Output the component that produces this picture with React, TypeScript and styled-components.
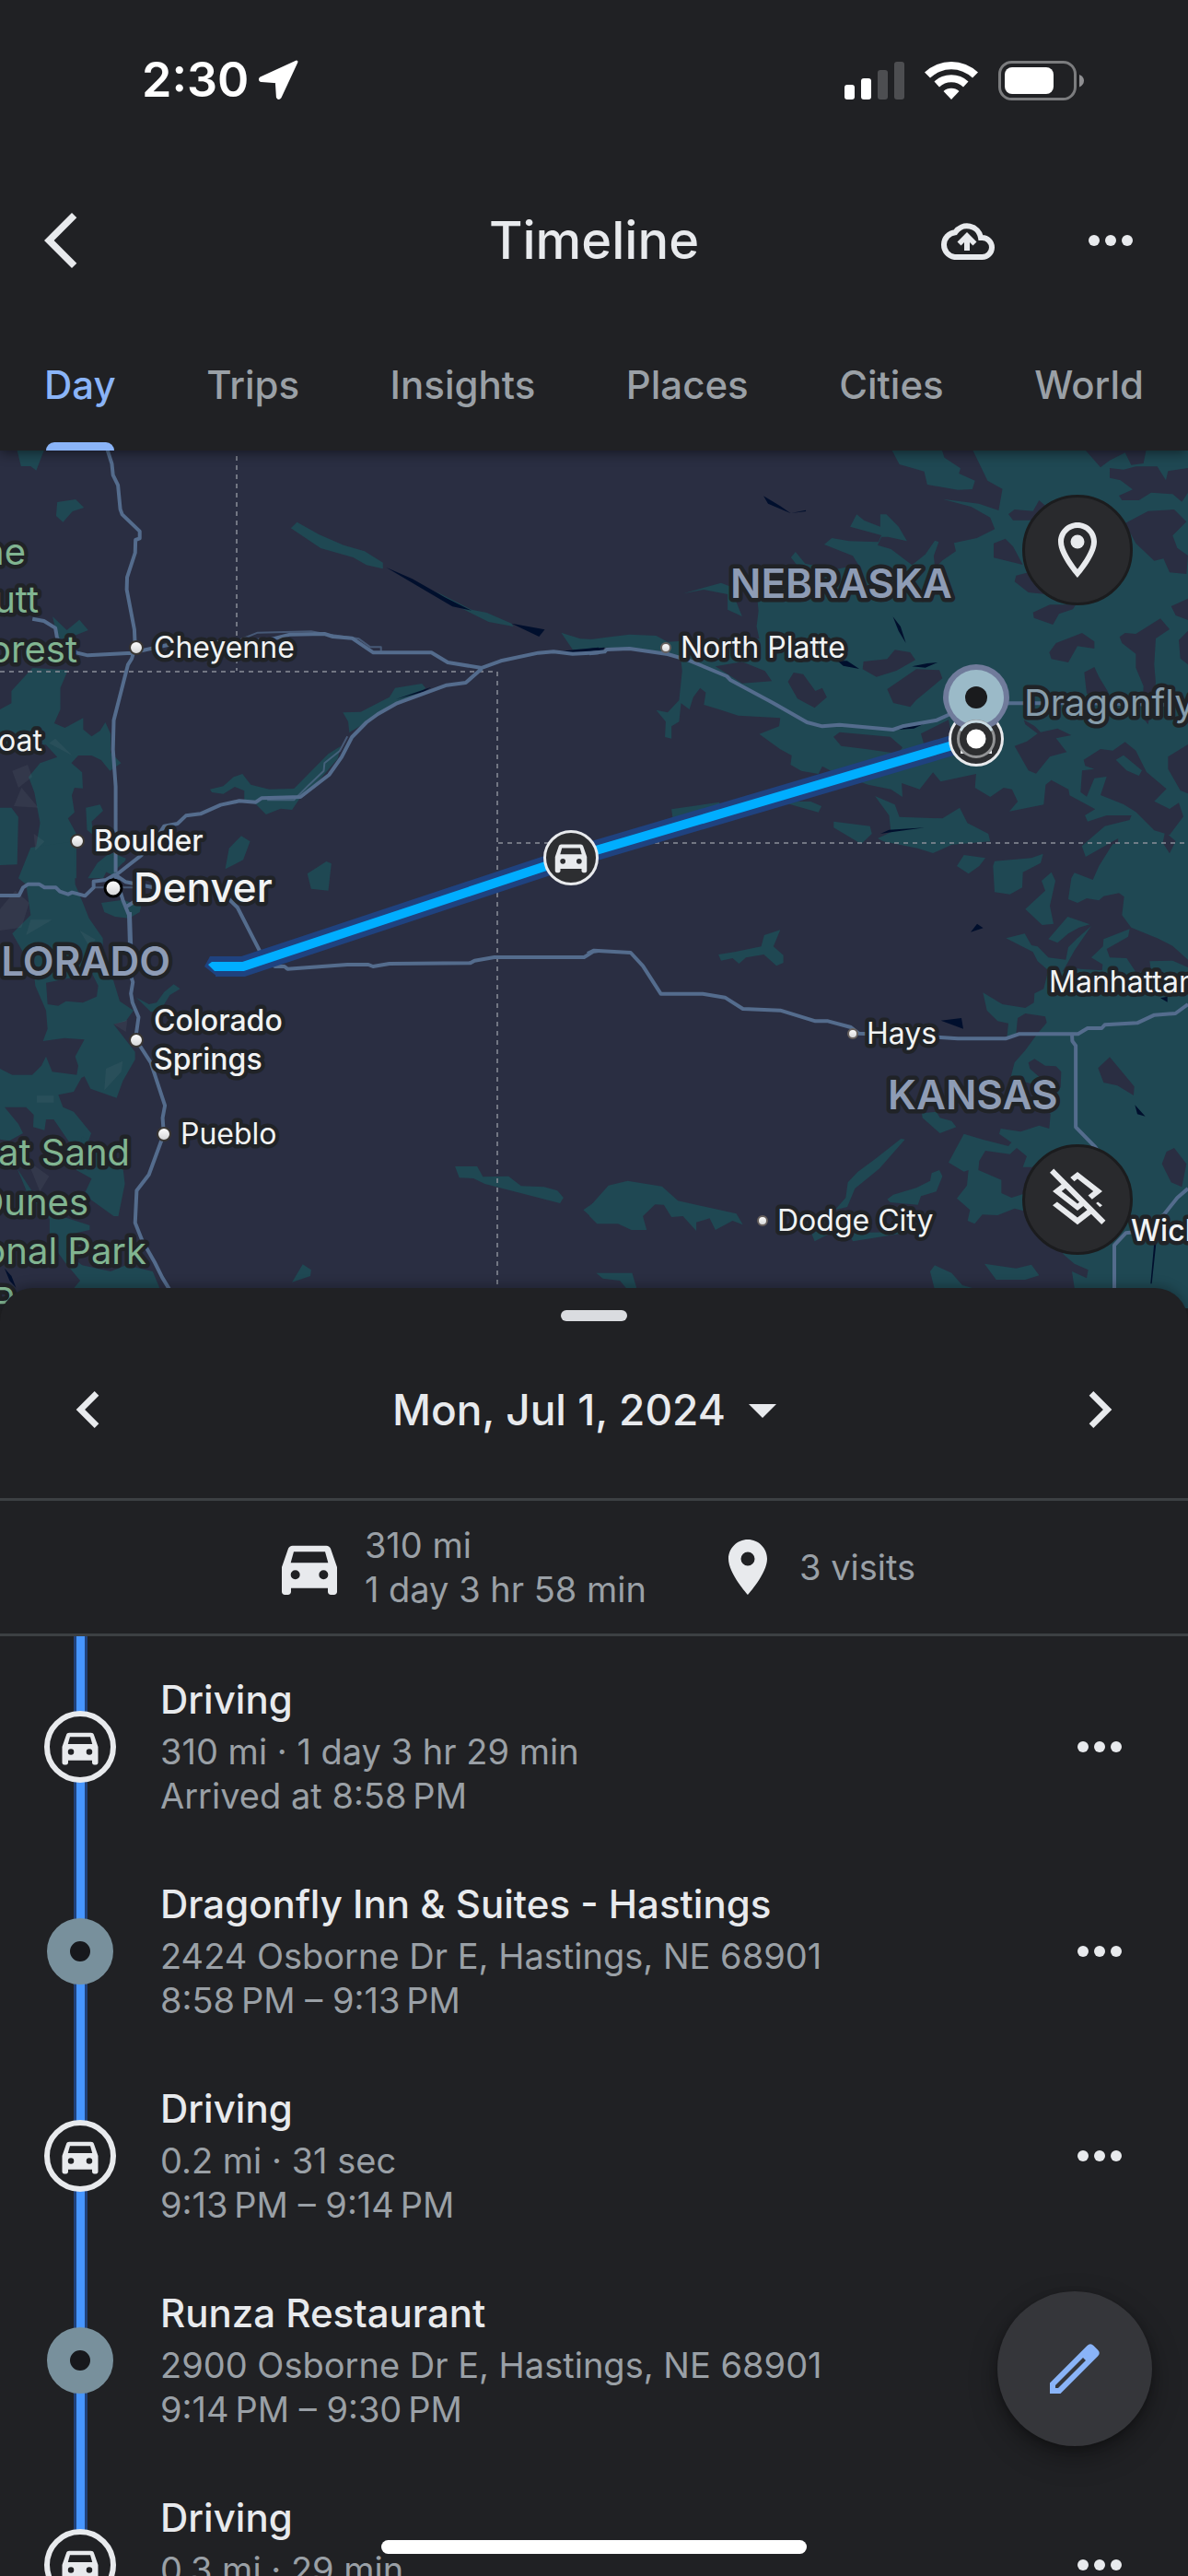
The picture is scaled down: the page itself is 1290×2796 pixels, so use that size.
import React from "react";
import styled, { createGlobalStyle, css } from "styled-components";
import {
  MdArrowBackIosNew,
  MdArrowDropDown,
  MdChevronLeft,
  MdChevronRight,
  MdLocationOn,
  MdOutlineLayersClear,
  MdOutlineLocationOn,
} from "react-icons/md";

const color = {
  surface: "#202124",
  text: "#e8eaed",
  muted: "#9aa0a6",
  accent: "#8ab4f8",
  divider: "#3c4043",
  land: "#2a2e42",
  park: "#1f4853",
  water: "#000f2d",
  road: "#546c8d",
};

const GlobalStyle = createGlobalStyle`
  *, *::before, *::after { box-sizing: border-box; }
  body {
    margin: 0;
    background: ${color.surface};
    color: ${color.text};
    font-family: Inter, "Liberation Sans", sans-serif;
  }
`;

const Screen = styled.div`
  position: relative;
  display: flex;
  flex-direction: column;
  height: 100vh;
  overflow: hidden;
`;

const bareButton = css`
  margin: 0;
  padding: 0;
  border: 0;
  background: none;
  color: inherit;
  font: inherit;
  cursor: pointer;
`;

const IconButton = styled.button`
  ${bareButton}
  display: flex;
  align-items: center;
  justify-content: center;
`;

const BackButton = styled(IconButton)`
  justify-self: start;
`;

const TopArea = styled.header`
  position: relative;
  z-index: 1;
  flex: none;
  background: ${color.surface};
  box-shadow: 0 3px 12px rgba(0, 0, 0, 0.45);
`;

const StatusBar = styled.div`
  display: flex;
  align-items: center;
  justify-content: space-between;
  height: 174px;
  padding: 0 112px 0 154px;
  color: #fff;
`;

const StatusGroup = styled.div<{ $gap: number }>`
  display: flex;
  align-items: center;
  gap: ${(p) => p.$gap}px;
`;

const Clock = styled.span`
  font-size: 52px;
  font-weight: 600;
  line-height: 60px;
`;

const TitleBar = styled.div`
  display: grid;
  grid-template-columns: 1fr auto 1fr;
  align-items: center;
  height: 174px;
  padding: 0 60px 0 30px;
`;

const Title = styled.h1`
  margin: 0;
  padding-left: 30px;
  font-size: 56px;
  font-weight: 500;
  line-height: 72px;
`;

const TitleActions = styled.div`
  display: flex;
  align-items: center;
  justify-content: flex-end;
  gap: 102px;
`;

const Tabs = styled.nav`
  display: flex;
  justify-content: space-between;
  height: 141px;
  padding: 0 48px;
`;

const Tab = styled.button<{ $active?: boolean }>`
  ${bareButton}
  position: relative;
  padding-bottom: 2px;
  font-size: 42px;
  font-weight: 500;
  line-height: 48px;
  color: ${(p) => (p.$active ? color.accent : color.muted)};

  ${(p) =>
    p.$active &&
    css`
      &::after {
        content: "";
        position: absolute;
        right: 2px;
        bottom: 0;
        left: 2px;
        height: 9px;
        border-radius: 9px 9px 0 0;
        background: ${color.accent};
      }
    `}
`;

const MapArea = styled.section`
  position: relative;
  flex: none;
  background: ${color.land};
`;

const MapCanvas = styled.svg`
  display: block;
  width: 100%;
  height: auto;

  .road {
    fill: none;
    stroke: ${color.road};
    stroke-width: 4px;
    stroke-linejoin: round;
    vector-effect: non-scaling-stroke;
  }
  .minor {
    stroke-width: 2px;
    opacity: 0.7;
  }
  .border {
    fill: none;
    stroke: #8b8e99;
    stroke-width: 1.5px;
    stroke-dasharray: 5 5;
    vector-effect: non-scaling-stroke;
  }
`;

type LabelKind = "town" | "city" | "major" | "state" | "park" | "place";

const labelStyles: Record<LabelKind, ReturnType<typeof css>> = {
  town: css`font-size: 32px; font-weight: 400; fill: #f1f3f4;`,
  city: css`font-size: 32px; font-weight: 500; fill: #f1f3f4;`,
  major: css`font-size: 44px; font-weight: 500; fill: #f1f3f4;`,
  state: css`font-size: 44px; font-weight: 600; fill: #8e9cb5;`,
  park: css`font-size: 40px; font-weight: 400; fill: #81b591;`,
  place: css`font-size: 40px; font-weight: 400; fill: #879dab;`,
};

const MapText = styled.text<{ $kind: LabelKind }>`
  font-family: Inter, "Liberation Sans", sans-serif;
  paint-order: stroke;
  stroke: #202327;
  stroke-width: 9px;
  stroke-linejoin: round;
  ${(p) => labelStyles[p.$kind]}
`;

const MapControls = styled.div`
  position: absolute;
  top: 48px;
  right: 60px;
  bottom: 58px;
  display: flex;
  flex-direction: column;
  justify-content: space-between;
`;

const MapControl = styled(IconButton)`
  width: 120px;
  height: 120px;
  border: 3px solid #1b1c1e;
  border-radius: 50%;
  background: #292a2d;
  color: ${color.text};
`;

const Sheet = styled.main`
  position: relative;
  display: flex;
  flex: 1;
  flex-direction: column;
  min-height: 0;
  margin-top: -22px;
  border-radius: 36px 36px 0 0;
  background: ${color.surface};
  box-shadow: 0 -3px 12px rgba(0, 0, 0, 0.25);
`;

const Handle = styled.div`
  flex: none;
  align-self: center;
  width: 72px;
  height: 12px;
  margin-top: 24px;
  border-radius: 6px;
  background: #dadce0;
`;

const DateBar = styled.div`
  display: flex;
  flex: none;
  align-items: center;
  justify-content: space-between;
  height: 192px;
  padding: 0 56px;
`;

const DateButton = styled.button`
  ${bareButton}
  display: flex;
  align-items: center;
  gap: 4px;
  font-size: 46px;
  font-weight: 500;
  line-height: 60px;
`;

const Summary = styled.section`
  display: flex;
  flex: none;
  align-items: center;
  justify-content: center;
  gap: 74px;
  height: 150px;
  border-top: 3px solid ${color.divider};
  border-bottom: 3px solid ${color.divider};
`;

const SummaryItem = styled.div`
  display: flex;
  align-items: center;
  gap: 20px;
`;

const Detail = styled.p`
  margin: 0;
  color: ${color.muted};
  font-size: 38px;
  line-height: 48px;
`;

const Entries = styled.ol`
  flex: 1;
  min-height: 0;
  margin: 0;
  padding: 9px 0 0;
  overflow-y: auto;
  scrollbar-width: none;
  list-style: none;
  background: linear-gradient(
      to right,
      #20427c 0 3px,
      #4796ff 3px 12px,
      #20427c 12px 15px
    )
    no-repeat 80px 0 / 15px 100%;
`;

const Entry = styled.li`
  display: grid;
  grid-template-columns: 174px 1fr auto;
  min-height: 222px;
  padding-right: 72px;
`;

const Rail = styled.div`
  display: flex;
  align-items: center;
  justify-content: center;
`;

const DrivingNode = styled.span`
  display: flex;
  align-items: center;
  justify-content: center;
  width: 78px;
  height: 78px;
  border: 6px solid ${color.text};
  border-radius: 50%;
  background: ${color.surface};
`;

const VisitNode = styled.span`
  width: 72px;
  height: 72px;
  border: 25px solid #78909c;
  border-radius: 50%;
  background: #17181c;
`;

const EntryBody = styled.div`
  padding-top: 30px;
`;

const EntryTitle = styled.h2`
  margin: 0 0 2px;
  font-size: 42px;
  font-weight: 500;
  line-height: 60px;
`;

const EditButton = styled(IconButton)`
  position: absolute;
  right: 39px;
  bottom: 141px;
  width: 168px;
  height: 168px;
  border-radius: 50%;
  background: #35363a;
  color: ${color.accent};
  box-shadow: 0 12px 30px rgba(0, 0, 0, 0.35), 0 3px 8px rgba(0, 0, 0, 0.25);
`;

const HomeIndicator = styled.div`
  position: absolute;
  bottom: 24px;
  left: 50%;
  width: 462px;
  height: 15px;
  margin-left: -231px;
  border-radius: 8px;
  background: #fff;
`;

const MoreDots = () => (
  <svg width="48" height="48" viewBox="0 0 48 48" fill={color.text} aria-hidden="true">
    <circle cx="6" cy="24" r="6" />
    <circle cx="24" cy="24" r="6" />
    <circle cx="42" cy="24" r="6" />
  </svg>
);

const LocationArrow = () => (
  <svg width="44" height="44" viewBox="0 0 42 42" aria-hidden="true">
    <path
      d="M40 2 L3 19 Q1.500 20.500 3.500 21.500 L19.500 22.500 L20.500 38.500 Q21.500 40.500 23 38.500 Z"
      fill="#fff"
      stroke="#fff"
      strokeWidth="3"
      strokeLinejoin="round"
    />
  </svg>
);

const Signal = () => (
  <svg width="65" height="43" viewBox="0 0 65 43" aria-hidden="true">
    <rect x="0" y="26" width="11" height="16" rx="3" fill="#fff" />
    <rect x="18" y="19" width="11" height="23" rx="3" fill="#fff" />
    <rect x="36" y="10" width="11" height="32" rx="3" fill="#4d4e51" />
    <rect x="54" y="1" width="11" height="41" rx="3" fill="#4d4e51" />
  </svg>
);

const Wifi = () => (
  <svg width="58" height="43" viewBox="0 0 58 43" aria-hidden="true">
    <g fill="#fff">
      <path d="M0 12.500 A42 42 0 0 1 58 12.500 L52 18.500 A33.500 33.500 0 0 0 6 18.500 Z" />
      <path d="M10.500 22.500 A27 27 0 0 1 47.500 22.500 L42 28.500 A19 19 0 0 0 16 28.500 Z" />
      <path d="M20.500 33 A13 13 0 0 1 37.500 33 L29 42 Z" />
    </g>
  </svg>
);

const Battery = () => (
  <svg width="94" height="43" viewBox="0 0 94 43" aria-hidden="true">
    <rect x="1.500" y="1.500" width="82" height="40" rx="13" fill="none" stroke="#7b7c7e" strokeWidth="3" />
    <rect x="7" y="7" width="53" height="29" rx="8" fill="#fff" />
    <path d="M88 15 Q93 17 93 21.500 Q93 26 88 28.500 Z" fill="#8f8f92" />
  </svg>
);

const CloudUpload = () => (
  <svg width="60" height="42" viewBox="0 0 60 42" aria-hidden="true">
    <path
      d="M46.500 39 A10.500 10.500 0 0 0 46.500 18 H45 A15.200 15.200 0 0 0 17.300 12.200 A13.500 13.500 0 0 0 16.500 39 Z"
      fill="none"
      stroke={color.text}
      strokeWidth="6"
    />
    <path d="M30 12 40.500 22.500 36.500 26.500 33 23V32H27V23L23.500 26.500 19.500 22.500Z" fill={color.text} />
  </svg>
);

const Car = ({ size, x, y }: { size: number; x?: number; y?: number }) => (
  <svg x={x} y={y} width={size} height={size} viewBox="0 0 24 24" aria-hidden="true">
    <path
      fill={color.text}
      fillRule="evenodd"
      d="M18.920 6.010C18.720 5.420 18.160 5 17.500 5h-11c-.66 0-1.210.42-1.420 1.010L3 12v8c0 .55.45 1 1 1h1c.55 0 1-.45 1-1v-1.200h12V20c0 .55.45 1 1 1h1c.55 0 1-.45 1-1v-8l-2.080-5.990zM6.900 7h10.200l1 3.600H5.900zM7.400 16a1.500 1.500 0 1 1 0-3 1.500 1.500 0 0 1 0 3zm9.200 0a1.500 1.500 0 1 1 0-3 1.500 1.500 0 0 1 0 3z"
    />
  </svg>
);

const Pencil = () => (
  <svg width="54" height="54" viewBox="0 0 54 54" aria-hidden="true">
    <path
      fill={color.accent}
      fillRule="evenodd"
      d="M0 54V42.500L40.500 2Q44-1.500 47.500 2L52 6.500Q55.500 10 52 13.500L11.500 54ZM6 48H9L39 18 36 15 6 45Z"
    />
  </svg>
);

type Label = { text: string; x: number; y: number; kind: LabelKind; end?: boolean };

const labels: Label[] = [
  { text: "ne", x: 28, y: 125, kind: "park", end: true },
  { text: "utt", x: 42, y: 177, kind: "park", end: true },
  { text: "orest", x: 84, y: 231, kind: "park", end: true },
  { text: "oat", x: 46, y: 327, kind: "town", end: true },
  { text: "Cheyenne", x: 167, y: 226, kind: "town" },
  { text: "North Platte", x: 739, y: 226, kind: "town" },
  { text: "NEBRASKA", x: 793, y: 161, kind: "state" },
  { text: "Dragonfly", x: 1112, y: 289, kind: "place" },
  { text: "Boulder", x: 102, y: 436, kind: "city" },
  { text: "Denver", x: 145, y: 491, kind: "major" },
  { text: "LORADO", x: 185, y: 571, kind: "state", end: true },
  { text: "Colorado", x: 167, y: 631, kind: "city" },
  { text: "Springs", x: 167, y: 673, kind: "city" },
  { text: "Pueblo", x: 196, y: 754, kind: "town" },
  { text: "at Sand", x: 141, y: 777, kind: "park", end: true },
  { text: "Dunes", x: 96, y: 831, kind: "park", end: true },
  { text: "onal Park", x: 159, y: 884, kind: "park", end: true },
  { text: "P", x: 16, y: 938, kind: "park", end: true },
  { text: "Manhattan", x: 1139, y: 589, kind: "town" },
  { text: "Hays", x: 941, y: 645, kind: "town" },
  { text: "KANSAS", x: 964, y: 716, kind: "state" },
  { text: "Dodge City", x: 844, y: 848, kind: "town" },
  { text: "Wichita", x: 1228, y: 859, kind: "city" },
];

const cityDots = [
  { x: 148, y: 215, r: 7 },
  { x: 84, y: 425, r: 7 },
  { x: 148, y: 641, r: 7 },
  { x: 178, y: 743, r: 7 },
  { x: 723, y: 215, r: 5 },
  { x: 926, y: 634, r: 5 },
  { x: 828, y: 837, r: 5 },
];

const NW = "translate(0 -8) scale(.41454 .33333)";
const NE = "translate(640 -8) scale(.41454 .33333)";
const SW = "translate(0 452) scale(.41454 .33333)";
const SE = "translate(640 452) scale(.41454 .33333)";
const FRONT_RANGE = "translate(0 292) scale(.33333)";
const EAST_NEBRASKA = "translate(900 0) scale(.33333)";
const EAST_KANSAS = "translate(900 452) scale(.33333)";

const parks: [string, string][] = [
  [
    NW,
    `M150 195 198 186 220 213 190 225 165 260 147 240Z M45 27H115L95 92 80 78H55Z
    M778 260 835 300 900 335 955 355 1003 392V412L960 400 925 375 840 345 762 280Z
    M1235 545 1275 555 1340 590 1345 600 1280 585 1200 535 1140 485Z
    M1470 620 1520 640 1568 643V672L1500 675Z
    M138 568 175 612 208 578 231 612 175 640H150Z
    M898 880 945 878 1020 830 1035 800 1105 786 1115 800 1100 815 1040 850 960 912 915 945 912 910Z
    M550 1130 585 1120 612 1090 635 1080 657 1115 705 1130 770 1128 860 1015 892 990 885 1030 840 1095 785 1160 765 1197 735 1193 697 1212 670 1178 640 1165V1135L615 1122 585 1145 555 1140Z
    M632 1282 655 1300 637 1360 590 1390 600 1322Z M805 1405 855 1365 868 1372 860 1460 815 1454Z
    M85 735 178 742 158 800V870L142 915 170 930 218 898V935L240 958 262 940 276 912 290 950V1010L317 1045 288 1070 265 1035 240 1020H205L187 1045 215 1075 217 1127 195 1125 188 1150 195 1205 178 1225 200 1275V1420H80L105 1240 90 1140 75 1090 105 1045 150 1025 120 985 60 990 0 1000V870L30 850V810Z
    M0 1190H30L48 1220 45 1375 0 1377Z M225 1190 262 1180 270 1200 240 1235 245 1280 228 1262Z
    M290 1335 330 1355 325 1368 290 1370 270 1420H230L255 1370Z`,
  ],
  [
    FRONT_RANGE,
    `M100 420 240 400 245 540 270 600 290 650 335 715V740L390 920 435 950 410 985 370 995 440 1085V1110L400 1180 380 1235 295 1205 275 1165 265 1170 240 1215 190 1225 205 1265 240 1280 297 1350 290 1370 240 1400 175 1305H150L145 1340 108 1330 110 1290 85 1265H15L60 1320 75 1350 30 1375 0 1370V1140L40 1160H105L135 1130 150 1100 170 1150 250 1160 255 1130 245 1100 275 1045 210 1040 140 1050 155 1010 150 950 115 870 110 820 40 700 100 640 85 540 60 520Z
    M330 600 400 590 460 610 455 630 420 650 375 645 340 630Z M325 490 370 450 410 460 380 490V515Z`,
  ],
  [
    SW,
    `M215 880 320 960 327 1035 310 1140 298 1140 220 1070 240 1018 200 990Z
    M45 985 95 1080 160 1140 235 1170V1185L180 1200 175 1260 215 1300 290 1320 330 1300 400 1320 420 1380H190L210 1350 170 1290 130 1220V1150L70 1060Z
    M455 385 472 400 445 420 420 470 395 475 357 428 390 450 410 445 430 410Z
    M1192 978H1250L1265 1012 1332 1010 1365 1042 1425 1045 1460 1057 1476 1080 1467 1098 1270 1035 1240 1017 1203 1015Z
    M1528 1120 1568 1085V1165Z M765 1355 793 1297 815 1315 813 1335Z`,
  ],
  [
    NE,
    `M790 20 812 72 877 95 885 138 965 155 1003 153 1010 125 968 102 972 85 930 50 922 20Z
    M1002 20 1043 125 1082 152 1072 222 1020 200 925 185 1000 210 1050 245 1062 283 1015 312 955 328 960 355 925 385 905 410 902 370 915 325 905 320 880 365 845 400 790 348 755 335 765 308 782 308 832 322 810 275 778 235H762V275L720 255 700 235 683 275 765 303 757 325 680 322 635 312 615 333 690 370 705 400 640 415 565 395 540 357 528 375 550 410 480 560 500 555 505 525 560 540 590 500 440 510 443 550 438 600 445 640 340 640 205 650 175 630 105 626 45 635 0 643V680L45 668 100 672 205 690 240 710 243 745 235 840 205 880 175 872 200 910 198 960 215 965V925L235 910 240 850 262 870 272 830 290 800 305 815 300 855 340 870 390 890 500 898 497 925 445 950 500 1000 530 1020 527 1050 555 1070 600 1080 610 1055 640 1075 730 1115 790 1130 820 1155 818 1110 865 1130 900 1075 920 1105 1013 1080 1010 1125 1050 1155 1085 1125 1107 1130 1122 1170 1100 1202 1190 1180 1195 1115 1210 1100 1255 1130 1258 1150 1325 1195 1298 1215 1305 1235 1355 1215 1420 1215 1415 1230 1350 1250 1290 1315 1300 1350 1385 1290 1385 1305 1330 1420H1568V20Z
    M345 458 245 493 300 480 362 495V545L400 567 388 530 370 470Z
    M748 1152 800 1180 812 1220 925 1225 970 1190 990 1240 1045 1275 1050 1300 950 1310 900 1338 860 1322 770 1300 755 1290 790 1270 785 1215Z
    M640 1235 735 1250 740 1275 712 1308 640 1255Z M215 1195 340 1172 345 1185 220 1240Z M500 1170H580L608 1185 600 1205Z`,
  ],
  [
    EAST_KANSAS,
    `M925 -72 880 0 860 45 800 22 790 40 780 108 810 120 840 105 880 112 895 98 945 88 962 100 955 160 985 200 1070 235 1120 260 1170 305V330L1120 308 1045 310 1050 345H1000L970 300 915 298 905 270 975 230 980 205 895 238 893 262 855 298 892 320 890 340 820 335 790 330 760 345 775 320 800 275 855 195 810 235 780 265 772 305 715 298 680 262 660 258 638 220 577 235 665 280 680 310 715 340 700 400 670 415 668 445 640 462 565 450 502 412 515 470 550 505 585 512 580 560 610 545 615 495 640 480 705 490 710 510 680 545 640 600 605 640 592 690 700 720 722 810 718 855 685 845 625 865 560 855 555 872 595 900 585 912 500 890 440 872 390 965 440 995 455 990 450 1040 417 1082 460 1120 452 1155 475 1165 500 1135 550 1137 605 1115 700 1140 765 1265 800 1295 845 1315 840 1342 792 1320 810 1440H1170V-72Z
    M417 0 440 -36 510 -26 490 0 455 25Z
    M535 0 540 -16 660 -26 698 -40 690 -10 632 20 630 70 590 92 540 85Z
    M640 140 705 80 693 48 725 20 738 48 720 130 732 188 695 192Z M715 238 778 165 850 190 815 200 780 220 745 250Z
    M303 805 350 800 362 820 400 830 415 850 362 870 305 820Z
    M235 888 248 890 165 985 85 1050 60 1110 20 1120 55 1080 62 1030 95 995 150 955Z
    M190 1085 210 1070 285 1048 330 1025 335 1000 360 990 370 1010 350 1060 300 1075 290 1103 200 1095Z
    M330 1320 345 1300 400 1325 435 1365 490 1380H345Z M507 1295 610 1310 660 1298 685 1333 640 1347H545Z`,
  ],
  [
    SE,
    `M0 1110 50 1040 100 1025 190 1043 232 1090 385 1132 402 1168 375 1155 330 1185 315 1147 280 1160V1188L245 1140 215 1143 195 1103 172 1102 140 1140 150 1185H110L75 1165H20L0 1140Z
    M338 288 380 280 450 262 458 225 500 208 482 262 508 290V315L490 325 457 288 410 298 392 318 375 300 345 308Z
    M18 1325H112L125 1380H100L80 1350 35 1343Z M580 1190H640L590 1222Z M680 1195 850 1190 690 1222Z`,
  ],
];

const clearings: [string, string][] = [
  [
    FRONT_RANGE,
    `M155 930 150 860 300 830 320 870 315 905 270 925 215 920 190 935Z`,
  ],
  [
    NE,
    `M520 780 535 750 560 755 592 810 610 800 622 830 590 865 545 835Z M330 730 400 715 460 745 478 778 400 785Z`,
  ],
  [
    EAST_NEBRASKA,
    `M585 210 605 195 665 200 685 165 720 195 660 230H600Z M830 -5 885 58 915 35 965 10 985 50 1025 45 1035 -5Z
    M915 60 960 65 1000 55H1070L1098 100 1105 70 1170 60V140L1150 170 1120 145 1050 140 1010 165H955L945 150 990 130 950 100 915 92Z
    M965 240 1040 200 1125 195 1165 235 1120 280 1135 320 1170 345 1165 405 1110 400 1090 355 1060 362 1000 305Z
    M537 305 575 290 600 315 632 375 537 352Z M610 410 650 400 700 470 650 465 605 430Z
    M665 530 720 505H805L795 520 750 535 730 570 668 548Z M1115 510 1170 485V555L1130 540Z
    M947 610 965 597 1000 600 1080 550 1110 585 1065 615 1060 700 1065 760 1040 895 1020 870 1025 770 1000 710V665L955 630Z
    M718 660 740 630 825 597 865 625V648L810 640 780 693 725 682Z M832 725 865 708 880 740 910 790 840 795Z M1140 620 1170 590V700L1145 680Z
    M113 690 190 682 215 652 265 660 282 685 220 720 155 740 110 715Z M190 780 285 715 360 718 370 745 285 815 265 838 210 825Z
    M15 935 35 920 200 935 240 970 225 990 120 975 40 965Z M300 925 390 880 400 930 310 960Z
    M605 965 645 950 680 925 640 895 635 880 670 900 690 920 745 908 790 930 740 940 775 985 720 1000 675 1055 650 1045Z
    M830 1010 885 975 925 980 965 952 1000 980 1035 1050 1100 1105 1060 1145 1110 1170 1140 1150 1155 1195 1110 1255 1060 1240 1000 1180 960 1155 885 1125 905 1065 865 1070 840 1130 820 1115 825 1045 865 1040 835 1030Z M935 1010 970 1045 1010 1062 1020 1045 960 995Z
    M1105 1000 1170 960V1120L1145 1110 1105 1040Z M1095 1245 1130 1275 1110 1315 1088 1280Z`,
  ],
  [
    EAST_KANSAS,
    `M650 640 670 628 705 650 740 652 757 670 755 720 740 745 700 700 655 660Z
    M490 960 510 927 590 938 612 918 645 945 632 980H680L690 1050 595 1080 562 1065V1022L487 990Z
    M877 658 915 622 930 640 995 718 993 747 940 715 895 705Z M1085 970 1100 930 1125 918 1165 970 1150 1045 1115 1030Z`,
  ],
];

const lakes: [string, string][] = [
  [
    NW,
    `M1012 408 1080 445 1165 505 1235 548 1185 535 1110 480Z M1340 590 1427 610 1412 633Z M1468 680 1568 668V676L1500 690Z M1037 837 1130 797 1110 812Z`,
  ],
  [
    NE,
    `M456 175 500 208 528 232 468 200Z M528 231 567 221V225Z M795 568 815 600 829 654 810 615Z M650 712 675 712 707 738 665 728Z M845 730 885 720 912 717 880 734Z M0 672 40 668 35 678 0 680Z M800 937 885 912 850 932Z M762 1275 785 1262 878 1255 790 1270Z`,
  ],
  [
    EAST_KANSAS,
    `M462 215 483 188 503 202Z M365 503 432 495 438 530Z M1080 430 1103 425V443Z M997 778 1031 815 1005 808Z M1060 1225 1066 1230 1052 1360H1048Z`,
  ],
  [SW, `M12 1310 30 1335 42 1373 25 1350Z`],
];

const ridges = `M40 170 90 150 105 190 60 225Z M70 225 125 290 45 285Z M110 375 145 400 115 430Z M180 65 235 120 160 80Z M100 655 170 655 85 705Z M0 620 50 560 95 600 70 680 0 690Z M260 690 312 720 290 740Z M400 1115 395 1150 340 1210 345 1140Z M120 1228H175V1250H120Z M370 995 415 980 410 1020Z M90 1440 160 1490 130 1540Z`;

const roads: [string, string][] = [
  [
    NW,
    `M280 20 293 70 296 107 309 140 315 218 320 235 366 290V313L355 318 354 360 333 440 332 480 352 610 354 668 345 705 335 725 298 905 296 1000 303 1120V1400
    M85 575 115 582 145 605 150 640 200 685 230 694 345 686 395 672 440 660 710 642 760 626 850 624 872 633 922 638 978 685H1130L1173 717 1262 735 1312 712 1410 686 1450 682 1500 689 1568 685
    M1262 737 1220 783 1170 791 1040 850 990 885 960 912 922 960 895 1025 862 1083 787 1155 685 1159 670 1172 627 1168 578 1181 525 1210 487 1216 465 1242 430 1250 415 1280 370 1345 303 1410`,
  ],
  [
    NE,
    `M0 688 40 682 45 675 105 672 205 690 260 710 360 762 370 775 480 848 570 912 610 925 655 920 795 936 820 925 910 905 940 888 1000 860 1100 850H1300L1568 856`,
  ],
  [
    FRONT_RANGE,
    `M0 576H62L75 550 92 539H127L145 550H182L195 563 222 572 235 566 277 577 305 550V530L345 525 375 508 410 532 500 550 M375 508 400 590 420 640 423 740 M412 612 440 595`,
  ],
  [
    SW,
    `M340 150 343 260 342 355 348 378 343 415 347 445 363 492 357 545V567L395 640 432 780 426 820 429 873 390 1005 358 1057 354 1162 372 1218 405 1290 425 1340 447 1385
    M600 108 622 135 690 300 720 327H745L753 335 910 321H965L977 327 1020 318 1232 316 1243 308 1295 297H1530L1555 278 1568 276`,
  ],
  [
    SE,
    `M-5 285 12 275 108 282 140 325 187 416H297L355 428 402 465 500 470 592 505H625L685 525 705 545 910 557 965 562H1090L1125 547H1280L1305 528H1342L1350 517 1435 511 1480 485 1535 480 1568 450
    M1264 547 1265 570 1274 585V850L1325 915 1375 1000 M1375 1385V1235L1405 1195 1440 1190 1505 1135 1540 1080 1568 1050`,
  ],
];

const minorRoads: [string, string][] = [
  [
    NW,
    `M625 645 675 620 815 616 850 624 940 640 970 667H998V685 M910 958 890 1005 850 1045 848 1070 810 1115 770 1165H700`,
  ],
  [FRONT_RANGE, `M305 550H440`],
];

const borders = `M257 7V240 M0 241H540V932 M541 427H1290`;

const route = "M234 561H264L620 443 1058 314";

const Layer = ({ shapes, ...rest }: { shapes: [string, string][] } & React.SVGProps<SVGPathElement>) => (
  <>
    {shapes.map(([grid, d], i) => (
      <g key={i} transform={grid}>
        <path d={d} {...rest} />
      </g>
    ))}
  </>
);

const TripMap = () => (
  <MapCanvas viewBox="0 1 1290 931" role="img" aria-label="Route map">
    <defs>
      <linearGradient id="cityDot" x1="0" y1="0" x2="0" y2="1">
        <stop offset="0" stopColor="#ffffff" />
        <stop offset="1" stopColor="#d2d3d5" />
      </linearGradient>
    </defs>
    <rect width="1290" height="932" fill={color.land} />
    <Layer shapes={parks} fill={color.park} />
    <Layer shapes={clearings} fill={color.land} />
    <g transform={FRONT_RANGE}>
      <path d={ridges} fill="#8c8fa0" opacity="0.1" />
    </g>
    <Layer shapes={lakes} fill={color.water} />
    <path className="border" d={borders} />
    <Layer shapes={minorRoads} className="road minor" />
    <Layer shapes={roads} className="road" />

    <path d={route} fill="none" stroke="#1f427f" strokeWidth="22" />
    <path d="M222 561 228 550H236V572Z" fill="#1f427f" />
    <path d={route} fill="none" stroke="#00aeff" strokeWidth="10" />
    <path d="M226 559 230 556H236V566H233Z" fill="#00aeff" />

    {labels.map((l) => (
      <MapText key={l.text} $kind={l.kind} x={l.x} y={l.y} textAnchor={l.end ? "end" : "start"}>
        {l.text}
      </MapText>
    ))}

    {cityDots.map((d) => (
      <circle
        key={`${d.x}-${d.y}`}
        cx={d.x}
        cy={d.y}
        r={d.r}
        fill="url(#cityDot)"
        stroke={d.r > 6 ? "#393633" : "#67605d"}
        strokeWidth="2"
      />
    ))}
    <circle cx="123" cy="476" r="9" fill="url(#cityDot)" stroke="#000" strokeWidth="3" />

    <circle cx="620" cy="443" r="28.5" fill="#2d2e31" stroke="#e8eaed" strokeWidth="3" />
    <Car x={597} y={419} size={46} />

    <circle cx="1060" cy="314" r="28.5" fill="#2d2e31" stroke="#e8eaed" strokeWidth="3" />
    <path d="M1043 322v8h6v-8z M1071 322v8h6v-8z" fill="#e8eaed" />
    <path d="M1024 269a36 36 0 1 1 72 0q0 14-14 29l-22 12-22-12q-14-15-14-29z" fill="#707b9b" />
    <circle cx="1060" cy="269" r="30" fill="#9bbac8" />
    <circle cx="1060" cy="269" r="12" fill="#1a1b1d" />
    <circle cx="1060" cy="314" r="19.5" fill="#2d2e30" stroke="#929395" strokeWidth="3" />
    <path d="M1043 305a19.500 19.500 0 0 1 34 0" fill="none" stroke="#c8dbe3" strokeWidth="3" />
    <circle cx="1060" cy="314" r="10.500" fill="#fff" />
  </MapCanvas>
);

type TimelineEntry = { kind: "driving" | "visit"; title: string; details: string[] };

const entries: TimelineEntry[] = [
  { kind: "driving", title: "Driving", details: ["310 mi · 1 day 3 hr 29 min", "Arrived at 8:58\u202fPM"] },
  {
    kind: "visit",
    title: "Dragonfly Inn & Suites - Hastings",
    details: ["2424 Osborne Dr E, Hastings, NE 68901", "8:58\u202fPM – 9:13\u202fPM"],
  },
  { kind: "driving", title: "Driving", details: ["0.2 mi · 31 sec", "9:13\u202fPM – 9:14\u202fPM"] },
  {
    kind: "visit",
    title: "Runza Restaurant",
    details: ["2900 Osborne Dr E, Hastings, NE 68901", "9:14\u202fPM – 9:30\u202fPM"],
  },
  { kind: "driving", title: "Driving", details: ["0.3 mi · 29 min"] },
];

const tabs = ["Day", "Trips", "Insights", "Places", "Cities", "World"];

export default function App() {
  const [tab, setTab] = React.useState("Day");

  return (
    <Screen>
      <GlobalStyle />
      <TopArea>
        <StatusBar>
          <StatusGroup $gap={10}>
            <Clock>2:30</Clock>
            <LocationArrow />
          </StatusGroup>
          <StatusGroup $gap={22}>
            <Signal />
            <Wifi />
            <Battery />
          </StatusGroup>
        </StatusBar>
        <TitleBar>
          <BackButton aria-label="Back">
            <MdArrowBackIosNew size={72} />
          </BackButton>
          <Title>Timeline</Title>
          <TitleActions>
            <IconButton aria-label="Back up timeline">
              <CloudUpload />
            </IconButton>
            <IconButton aria-label="More options">
              <MoreDots />
            </IconButton>
          </TitleActions>
        </TitleBar>
        <Tabs>
          {tabs.map((name) => (
            <Tab key={name} $active={name === tab} onClick={() => setTab(name)}>
              {name}
            </Tab>
          ))}
        </Tabs>
      </TopArea>

      <MapArea>
        <TripMap />
        <MapControls>
          <MapControl aria-label="Show places">
            <MdOutlineLocationOn size={72} />
          </MapControl>
          <MapControl aria-label="Hide layers">
            <MdOutlineLayersClear size={72} />
          </MapControl>
        </MapControls>
      </MapArea>

      <Sheet>
        <Handle />
        <DateBar>
          <IconButton aria-label="Previous day">
            <MdChevronLeft size={80} />
          </IconButton>
          <DateButton>
            Mon, Jul 1, 2024
            <MdArrowDropDown size={72} />
          </DateButton>
          <IconButton aria-label="Next day">
            <MdChevronRight size={80} />
          </IconButton>
        </DateBar>
        <Summary>
          <SummaryItem>
            <Car size={80} />
            <div>
              <Detail>310 mi</Detail>
              <Detail>1 day 3 hr 58 min</Detail>
            </div>
          </SummaryItem>
          <SummaryItem>
            <MdLocationOn size={72} />
            <Detail>3 visits</Detail>
          </SummaryItem>
        </Summary>
        <Entries>
          {entries.map((entry, i) => (
            <Entry key={i}>
              <Rail>
                {entry.kind === "driving" ? (
                  <DrivingNode>
                    <Car size={52} />
                  </DrivingNode>
                ) : (
                  <VisitNode />
                )}
              </Rail>
              <EntryBody>
                <EntryTitle>{entry.title}</EntryTitle>
                {entry.details.map((line) => (
                  <Detail key={line}>{line}</Detail>
                ))}
              </EntryBody>
              <IconButton aria-label={`More options for ${entry.title}`}>
                <MoreDots />
              </IconButton>
            </Entry>
          ))}
        </Entries>
      </Sheet>

      <EditButton aria-label="Edit day">
        <Pencil />
      </EditButton>
      <HomeIndicator />
    </Screen>
  );
}
